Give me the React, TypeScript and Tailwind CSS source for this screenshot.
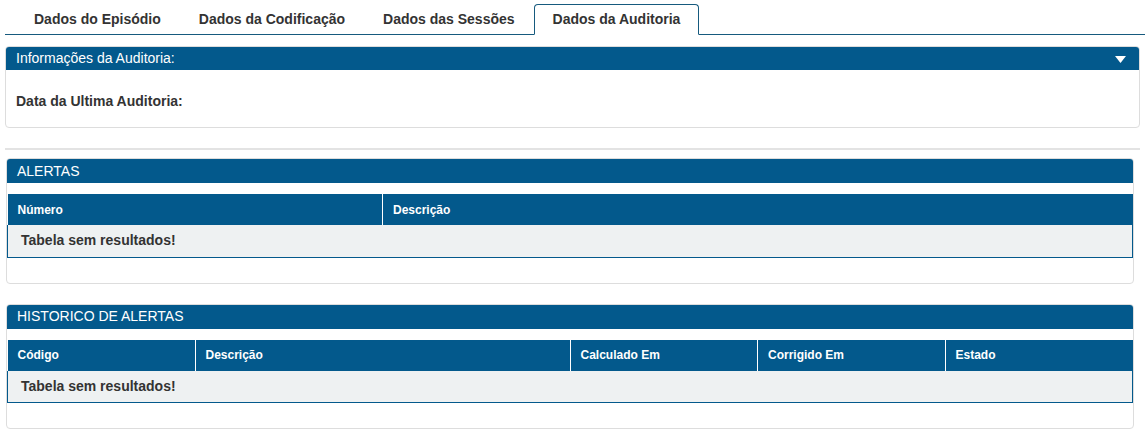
import React from 'react';

const tabs = ['Dados do Episódio', 'Dados da Codificação', 'Dados das Sessões', 'Dados da Auditoria'];

interface Column {
  label: string;
  width: string;
}

function PanelHeader({ title, toggle, height }: { title: string; toggle?: boolean; height: string }) {
  return (
    <div className={`flex ${height} items-center justify-between rounded-t-[3px] bg-[#03598c] pl-[10px] pr-[13px] text-[14px] text-white`}>
      <span>{title}</span>
      {toggle && (
        <svg width="11" height="7" viewBox="0 0 11 7" className="mt-[1px]">
          <path d="M0 0 L11 0 L5.5 7 Z" fill="#ffffff" />
        </svg>
      )}
    </div>
  );
}

function EmptyTable({ columns }: { columns: Column[] }) {
  return (
    <table className="mt-[11px] w-full table-fixed border-collapse">
      <thead>
        <tr className="h-[31px] bg-[#03598c]">
          {columns.map((col, i) => (
            <th
              key={col.label}
              className={`${col.width} px-[10px] text-left text-[12px] font-bold text-white ${i > 0 ? 'border-l border-white' : ''}`}
            >
              {col.label}
            </th>
          ))}
        </tr>
      </thead>
      <tbody>
        <tr className="h-[32px] border border-t-0 border-[#03598c] bg-[#eef1f2]">
          <td colSpan={columns.length} className="px-[13px] text-[14px] font-bold text-[#333]">
            Tabela sem resultados!
          </td>
        </tr>
      </tbody>
    </table>
  );
}

function AlertPanel({ title, columns }: { title: string; columns: Column[] }) {
  return (
    <div className="ml-[6px] mr-[11px] rounded-[4px] border border-[#dddddd] pb-[25px]">
      <PanelHeader title={title} height="h-[24px]" />
      <EmptyTable columns={columns} />
    </div>
  );
}

export default function App() {
  return (
    <div className="h-[433px] w-[1145px] bg-white pt-[4px] text-[#333]" style={{ fontFamily: '"Liberation Sans", Arial, sans-serif' }}>
      <div className="ml-[5px] flex border-b border-[#165a7e] pl-[10px]">
        {tabs.map((tab, i) => {
          const active = i === tabs.length - 1;
          return (
            <div
              key={tab}
              className={`-mb-px flex h-[31px] items-center rounded-t-[4px] border px-[18px] text-[14px] font-bold text-[#333] ${
                active ? 'border-[#165a7e] border-b-transparent bg-white' : 'border-transparent'
              }`}
            >
              {tab}
            </div>
          );
        })}
      </div>

      <div className="ml-[5px] mr-[5px] mt-[11px] rounded-[4px] border border-[#dddddd]">
        <PanelHeader title="Informações da Auditoria:" toggle height="h-[23px]" />
        <div className="px-[10px] pb-[15px] pt-[21px] text-[14px] font-bold text-[#333]">Data da Ultima Auditoria:</div>
      </div>

      <div className="ml-[5px] mr-[5px] mt-[20px] h-[2px] bg-[#e3e3e3]" />

      <div className="mt-[8px]">
        <AlertPanel
          title="ALERTAS"
          columns={[
            { label: 'Número', width: 'w-1/3' },
            { label: 'Descrição', width: 'w-2/3' },
          ]}
        />
      </div>

      <div className="mt-[20px]">
        <AlertPanel
          title="HISTORICO DE ALERTAS"
          columns={[
            { label: 'Código', width: 'w-1/6' },
            { label: 'Descrição', width: 'w-2/6' },
            { label: 'Calculado Em', width: 'w-1/6' },
            { label: 'Corrigido Em', width: 'w-1/6' },
            { label: 'Estado', width: 'w-1/6' },
          ]}
        />
      </div>
    </div>
  );
}
